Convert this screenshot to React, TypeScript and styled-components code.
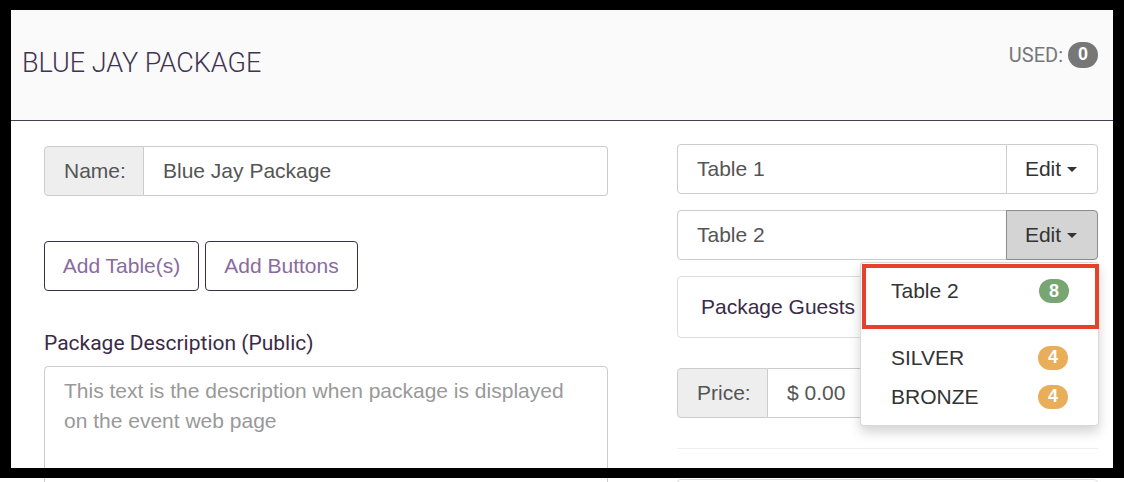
import React from "react";
import styled, { createGlobalStyle } from "styled-components";

const GlobalStyle = createGlobalStyle`
  html, body { margin: 0; padding: 0; background: #fff; }
  body { font-family: "Liberation Sans", Arial, sans-serif; overflow: hidden; }
  * { box-sizing: border-box; }
`;

const Frame = styled.div`
  position: fixed;
  left: 0;
  top: 0;
  width: 1124px;
  height: 478px;
  border-style: solid;
  border-color: #000;
  border-width: 10px 11px 10px 11px;
  pointer-events: none;
  z-index: 20;
`;

const Page = styled.div`
  width: 1124px;
`;

const Header = styled.header`
  height: 121px;
  background: #fafafa;
  border-bottom: 1px solid #4a3b58;
  display: flex;
  align-items: center;
  justify-content: space-between;
  padding: 5px 26px 0 22px;
`;

const Title = styled.h1`
  margin: 0;
  font-family: Roboto, "Liberation Sans", sans-serif;
  font-weight: 300;
  font-size: 27px;
  color: #3f3350;
`;

const Used = styled.div`
  display: flex;
  align-items: center;
  gap: 5px;
  margin-top: -16px;
  font-family: Roboto, "Liberation Sans", sans-serif;
  font-size: 20px;
  color: #777;
`;

const Pill = styled.span<{ $bg: string }>`
  display: inline-flex;
  align-items: center;
  justify-content: center;
  min-width: 30px;
  height: ${(p) => (p.$bg === "#777" ? "26px" : "24px")};
  padding: 0 8px;
  border-radius: 13px;
  background: ${(p) => p.$bg};
  color: #fff;
  font-family: "Liberation Sans", Arial, sans-serif;
  font-weight: 700;
  font-size: 18px;
`;

const Body = styled.main`
  display: grid;
  grid-template-columns: 564px 421px;
  column-gap: 69px;
  padding: 23px 0 0 44px;
  align-items: start;
`;

const Column = styled.div<{ $offset?: number }>`
  display: flex;
  flex-direction: column;
  margin-top: ${(p) => p.$offset ?? 0}px;
`;

const Group = styled.div<{ $mb?: number }>`
  position: relative;
  display: flex;
  height: 50px;
  margin-bottom: ${(p) => p.$mb ?? 0}px;
`;

const Addon = styled.div<{ $w: number }>`
  flex: 0 0 ${(p) => p.$w}px;
  display: flex;
  align-items: center;
  padding-left: 19px;
  background: #eee;
  border: 1px solid #ccc;
  border-radius: 4px 0 0 4px;
  color: #555;
  font-size: 21px;
`;

const Field = styled.div<{ $round: "left" | "right" | "all"; $pl?: number }>`
  flex: 1;
  display: flex;
  align-items: center;
  padding-left: ${(p) => p.$pl ?? 19}px;
  background: #fff;
  border: 1px solid #ccc;
  ${(p) => (p.$round === "right" ? "border-left: none;" : "")}
  border-radius: ${(p) =>
    p.$round === "all" ? "4px" : p.$round === "left" ? "4px 0 0 4px" : "0 4px 4px 0"};
  color: #555;
  font-size: 21px;
`;

const EditBtn = styled.div<{ $active?: boolean }>`
  flex: 0 0 92px;
  display: flex;
  align-items: center;
  justify-content: center;
  gap: 6px;
  padding-right: 2px;
  border: 1px solid ${(p) => (p.$active ? "#8c8c8c" : "#ccc")};
  border-radius: 0 4px 4px 0;
  margin-left: -1px;
  background: ${(p) => (p.$active ? "#d4d4d4" : "#fff")};
  color: #333;
  font-size: 21px;
`;

const Caret = styled.span`
  width: 0;
  height: 0;
  border-top: 5px solid #333;
  border-left: 5.5px solid transparent;
  border-right: 5.5px solid transparent;
`;

const ButtonRow = styled.div`
  display: flex;
  gap: 6px;
  margin-top: 45px;
`;

const OutlineButton = styled.button<{ $w: number }>`
  width: ${(p) => p.$w}px;
  height: 50px;
  background: #fff;
  border: 1px solid #3d2f4a;
  border-radius: 4px;
  color: #8a6ba0;
  font-family: "Liberation Sans", Arial, sans-serif;
  font-size: 21px;
  padding: 0;
`;

const Label = styled.label`
  margin-top: 40px;
  font-family: Roboto, "Liberation Sans", sans-serif;
  font-size: 21px;
  line-height: 24px;
  color: #3a2b47;
`;

const TextArea = styled.div`
  margin-top: 11px;
  height: 140px;
  padding: 9px 19px;
  border: 1px solid #ccc;
  border-radius: 4px;
  color: #999;
  font-size: 21px;
  line-height: 30px;
`;

const Panel = styled.div`
  height: 62px;
  margin-bottom: 30px;
  display: flex;
  align-items: center;
  padding-left: 23px;
  border: 1px solid #ddd;
  border-radius: 4px;
  color: #3a2b47;
  font-size: 21px;
`;

const Rule = styled.hr`
  margin: 30px 0 30px;
  border: none;
  border-top: 1px solid #eee;
`;

const NextBox = styled.div`
  height: 50px;
  border: 1px solid #ddd;
  border-radius: 4px;
`;

const Menu = styled.div`
  position: absolute;
  top: 52px;
  right: -1px;
  width: 239px;
  background: #fff;
  border: 1px solid rgba(0, 0, 0, 0.15);
  border-radius: 4px;
  box-shadow: 0 6px 12px rgba(0, 0, 0, 0.175);
  padding: 1px 0 9px 1px;
  z-index: 5;
`;

const MenuItem = styled.div<{ $highlight?: boolean }>`
  display: flex;
  align-items: ${(p) => (p.$highlight ? "flex-start" : "center")};
  justify-content: space-between;
  height: ${(p) => (p.$highlight ? "65px" : "39px")};
  padding: ${(p) => (p.$highlight ? "11px 26px 0 25px" : "0 30px 0 29px")};
  border: ${(p) => (p.$highlight ? "4px solid #e8412a" : "none")};
  margin-bottom: ${(p) => (p.$highlight ? "9px" : "0")};
  margin-right: ${(p) => (p.$highlight ? "-1px" : "0")};
  color: #333;
  font-size: 21px;
`;

export default function App() {
  return (
    <Page>
      <GlobalStyle />
      <Frame />
      <Header>
        <Title>BLUE JAY PACKAGE</Title>
        <Used>
          USED: <Pill $bg="#777">0</Pill>
        </Used>
      </Header>
      <Body>
        <Column $offset={2}>
          <Group>
            <Addon $w={100}>Name:</Addon>
            <Field $round="right">Blue Jay Package</Field>
          </Group>
          <ButtonRow>
            <OutlineButton $w={155}>Add Table(s)</OutlineButton>
            <OutlineButton $w={153}>Add Buttons</OutlineButton>
          </ButtonRow>
          <Label>Package Description (Public)</Label>
          <TextArea>
            This text is the description when package is displayed on the event web page
          </TextArea>
        </Column>
        <Column>
          <Group $mb={16}>
            <Field $round="left">Table 1</Field>
            <EditBtn>
              Edit <Caret />
            </EditBtn>
          </Group>
          <Group $mb={16}>
            <Field $round="left">Table 2</Field>
            <EditBtn $active>
              Edit <Caret />
            </EditBtn>
            <Menu>
              <MenuItem $highlight>
                Table 2 <Pill $bg="#78a672">8</Pill>
              </MenuItem>
              <MenuItem>
                SILVER <Pill $bg="#e8ae5a">4</Pill>
              </MenuItem>
              <MenuItem>
                BRONZE <Pill $bg="#e8ae5a">4</Pill>
              </MenuItem>
            </Menu>
          </Group>
          <Panel>Package Guests Total</Panel>
          <Group>
            <Addon $w={91}>Price:</Addon>
            <Field $round="right">$ 0.00</Field>
          </Group>
          <Rule />
          <NextBox />
        </Column>
      </Body>
    </Page>
  );
}
